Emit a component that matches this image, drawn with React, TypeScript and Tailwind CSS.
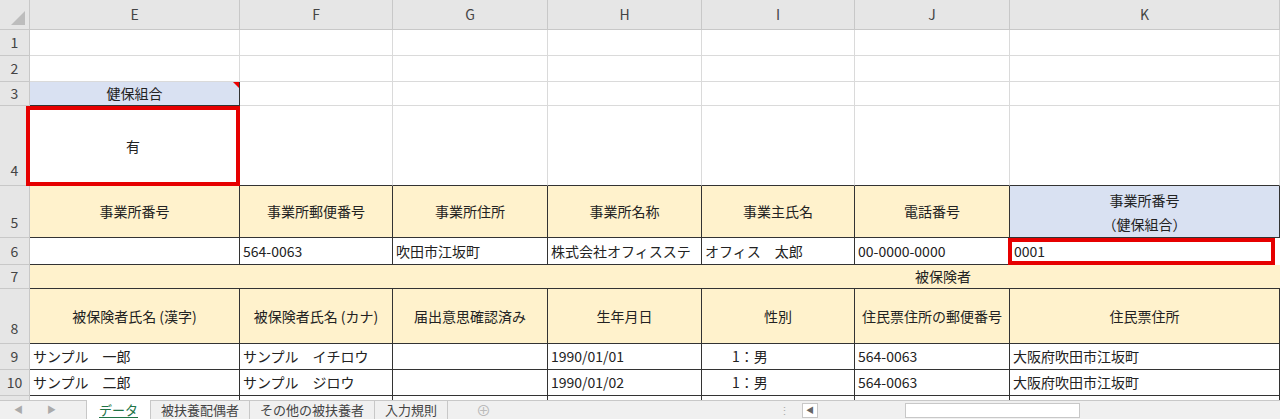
const font = { fontFamily: '"Noto Sans CJK JP", "Liberation Sans", sans-serif' }

function C({ c = "", children }: { c?: string; children?: React.ReactNode }) {
  return <div className={"flex items-center overflow-hidden whitespace-nowrap text-[14px] text-[#222] " + c}>{children}</div>
}

const g = "border-r border-b border-[#dadada] bg-white"
const t = "border-r border-b border-[#333]"
const y = t + " bg-[#fff2cc] justify-center"
const w = t + " bg-white pl-[3px]"
const rh = "justify-center bg-[#e6e6e6] border-r border-b border-[#c8c8c8] text-[#444]"

export default function App() {
  return (
    <div style={font} className="h-[419px] w-[1280px] overflow-hidden bg-white">
      <div className="grid grid-cols-[30px_210px_153px_155px_154px_153px_155px_270px] grid-rows-[30px_26px_26px_24px_80px_52px_27px_24px_55px_26px_26px_4px]">
        <C c="bg-[#e6e6e6] border-r border-b border-[#c8c8c8] justify-end items-end p-1">
          <div className="h-0 w-0 border-b-[14px] border-l-[14px] border-b-[#bdbdbd] border-l-transparent" />
        </C>
        {["E", "F", "G", "H", "I", "J", "K"].map((l) => (
          <C key={l} c={rh}>{l}</C>
        ))}
        {[1, 2].map((r) => (
          <>
            <C key={"h" + r} c={rh}>{r}</C>
            {[0, 1, 2, 3, 4, 5, 6].map((i) => <C key={r + "-" + i} c={g} />)}
          </>
        ))}
        <C c={rh}>3</C>
        <C c={t + " relative bg-[#d9e1f2] justify-center"}>
          健保組合
          <span className="absolute right-0 top-0 h-0 w-0 border-l-[6px] border-t-[6px] border-l-transparent border-t-[#e00]" />
        </C>
        {[0, 1, 2, 3, 4, 5].map((i) => <C key={"r3" + i} c={g} />)}
        <C c={rh + " items-end pb-1"}>4</C>
        <C c="bg-white border-[4px] border-[#e60000] -ml-[4px] justify-center">有</C>
        {[0, 1, 2, 3, 4, 5].map((i) => <C key={"r4" + i} c={g + " border-b-[#333]"} />)}
        <C c={rh + " items-end pb-1"}>5</C>
        {["事業所番号", "事業所郵便番号", "事業所住所", "事業所名称", "事業主氏名", "電話番号"].map((s) => (
          <C key={s} c={y}>{s}</C>
        ))}
        <C c={t + " bg-[#d9e1f2] flex-col justify-center leading-[24px]"}>
          <span>事業所番号</span>
          <span>（健保組合）</span>
        </C>
        <C c={rh}>6</C>
        <C c={w} />
        <C c={w}>564-0063</C>
        <C c={w}>吹田市江坂町</C>
        <C c={w}>株式会社オフィスステ</C>
        <C c={w}>オフィス　太郎</C>
        <C c={w}>00-0000-0000</C>
        <C c="bg-white border-[4px] border-[#e60000] mr-[5px] -ml-[2px] pl-[2px]">0001</C>
        <C c={rh}>7</C>
        <C c="col-span-7 border-b border-[#333] bg-[#fff2cc] justify-end pr-[309px]">被保険者</C>
        <C c={rh + " items-end pb-1"}>8</C>
        {["被保険者氏名 (漢字)", "被保険者氏名 (カナ)", "届出意思確認済み", "生年月日", "性別", "住民票住所の郵便番号", "住民票住所"].map((s) => (
          <C key={s} c={y}>{s}</C>
        ))}
        {[
          ["9", "サンプル　一郎", "サンプル　イチロウ", "1990/01/01"],
          ["10", "サンプル　二郎", "サンプル　ジロウ", "1990/01/02"],
        ].map((r) => (
          <>
            <C key={"n" + r[0]} c={rh}>{r[0]}</C>
            <C c={w}>{r[1]}</C>
            <C c={w}>{r[2]}</C>
            <C c={w} />
            <C c={w}>{r[3]}</C>
            <C c={w + " pl-[30px]"}>1：男</C>
            <C c={w}>564-0063</C>
            <C c={w}>大阪府吹田市江坂町</C>
          </>
        ))}
        <C c="bg-[#e6e6e6] border-r border-[#c8c8c8]" />
        {[0, 1, 2, 3, 4, 5, 6].map((i) => <C key={"r11" + i} c="border-r border-[#333] bg-white" />)}
      </div>
      <div className="flex h-[19px] items-stretch border-t border-[#c8c8c8] bg-[#f0f0f0] text-[13px] text-[#444]">
        <div className="flex w-[70px] items-center justify-center gap-6 text-[9px] text-[#aaa]">
          <span>◀</span><span>▶</span>
        </div>
        <div className="w-[16px]" />
        <div className="-mt-px flex items-center border-x border-[#c8c8c8] bg-white px-3 text-[#217346] underline decoration-[#217346] underline-offset-2">データ</div>
        <div className="flex items-center border-r border-[#c8c8c8] px-2.5">被扶養配偶者</div>
        <div className="flex items-center border-r border-[#c8c8c8] px-2.5">その他の被扶養者</div>
        <div className="flex items-center border-r border-[#c8c8c8] px-2.5">入力規則</div>
        <div className="ml-7 flex items-center text-[15px] text-[#bbb]">⊕</div>
        <div className="ml-auto flex items-center">
          <span className="mr-3 text-[11px] text-[#aaa]">⋮</span>
          <div className="flex h-[15px] w-[16px] items-center justify-center border border-[#c8c8c8] bg-white text-[8px] text-[#666]">◀</div>
          <div className="ml-[87px] h-[15px] w-[175px] border border-[#c8c8c8] bg-white" />
          <div className="w-[200px]" />
        </div>
      </div>
    </div>
  )
}
